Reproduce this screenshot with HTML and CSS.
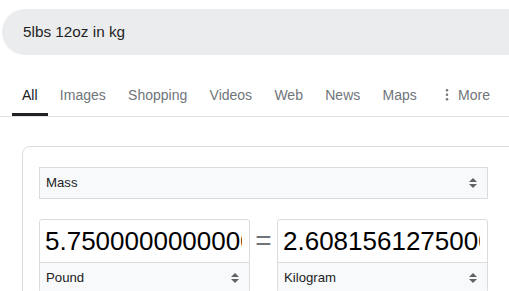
FILE: index.html
```html
<!DOCTYPE html>
<html lang="en">
<head>
    <meta charset="UTF-8">
    <title>5lbs 12oz in kg - Search</title>
    <link rel="stylesheet" href="styles.css">
</head>
<body>
    <!-- Search box -->
    <div class="search-bar">
        <span class="query">5lbs 12oz in kg</span>
    </div>

    <!-- Result tabs -->
    <nav class="tabs">
        <a class="tab active">All</a>
        <a class="tab">Images</a>
        <a class="tab">Shopping</a>
        <a class="tab">Videos</a>
        <a class="tab">Web</a>
        <a class="tab">News</a>
        <a class="tab">Maps</a>
        <a class="tab more">
            <svg class="dots" width="16" height="16" viewBox="0 0 16 16">
                <circle cx="8" cy="3.3" r="1.25"/>
                <circle cx="8" cy="7.8" r="1.25"/>
                <circle cx="8" cy="12.3" r="1.25"/>
            </svg>
            More
        </a>
    </nav>

    <!-- Unit converter card -->
    <div class="card">
        <div class="select wide">
            <span>Mass</span>
            <svg class="arrows" width="8" height="12" viewBox="0 0 8 12">
                <path d="M0 5 L4 1 L8 5 Z"/>
                <path d="M0 7 L4 11 L8 7 Z"/>
            </svg>
        </div>

        <div class="convert-row">
            <div class="unit-box">
                <div class="value"><span class="num">5.7500000000000000</span></div>
                <div class="select">
                    <span>Pound</span>
                    <svg class="arrows" width="8" height="12" viewBox="0 0 8 12">
                        <path d="M0 5 L4 1 L8 5 Z"/>
                        <path d="M0 7 L4 11 L8 7 Z"/>
                    </svg>
                </div>
            </div>
            <div class="equals">=</div>
            <div class="unit-box">
                <div class="value"><span class="num">2.6081561275000000</span></div>
                <div class="select">
                    <span>Kilogram</span>
                    <svg class="arrows" width="8" height="12" viewBox="0 0 8 12">
                        <path d="M0 5 L4 1 L8 5 Z"/>
                        <path d="M0 7 L4 11 L8 7 Z"/>
                    </svg>
                </div>
            </div>
        </div>
    </div>
</body>
</html>
```
FILE: styles.css
```css
/* Page */
body {
    margin: 0;
    overflow: hidden;
    background: #fff;
    font-family: 'Liberation Sans', Arial, sans-serif;
    color: #202124;
}

.search-bar {
    display: flex;
    align-items: center;
    width: 640px;
    height: 46px;
    margin: 9px 0 0 2px;
    padding-left: 21px;
    background: #ebecee;
    border-radius: 23px;
}

.query {
    font-size: 15.3px;
    color: #1f1f1f;
}

/* Tabs */
.tabs {
    display: flex;
    gap: 2.3px;
    margin-top: 21px;
    padding-left: 12px;
    border-bottom: 1px solid #e3e3e3;
}

.tab {
    display: flex;
    align-items: center;
    box-sizing: border-box;
    height: 40px;
    padding: 0 10px;
    border-bottom: 3px solid transparent;
    font-size: 14px;
    color: #70757a;
}

.tab.active {
    color: #202124;
    border-bottom-color: #202124;
}

.dots {
    fill: #70757a;
    margin-right: 3px;
}

/* Converter card */
.card {
    width: 600px;
    margin: 29px 0 0 22px;
    padding: 20px 16px;
    border: 1px solid #dadce0;
    border-radius: 8px;
}

.select {
    display: flex;
    align-items: center;
    justify-content: space-between;
    box-sizing: border-box;
    height: 32px;
    padding: 0 10px 1px 6px;
    background: #f8f9fa;
    font-size: 13.2px;
    color: #202124;
}

.select.wide {
    width: 449px;
    border: 1px solid #dadce0;
}

.arrows {
    fill: #5f6368;
}

.convert-row {
    display: flex;
    width: 449px;
    margin-top: 20px;
}

.unit-box {
    width: 211px;
    box-sizing: border-box;
    border: 1px solid #dadce0;
    border-radius: 3px;
    overflow: hidden;
}

.unit-box .select {
    height: 29px;
    padding-bottom: 0;
}

.value {
    height: 42px;
    padding: 0 7px 0 5px;
    border-bottom: 1px solid #dadce0;
}

.num {
    display: block;
    line-height: 43px;
    overflow: hidden;
    white-space: nowrap;
    font-size: 26px;
    color: #000;
}

.equals {
    flex: 1;
    text-align: center;
    font-size: 28px;
    line-height: 44px;
    color: #70757a;
}
```
